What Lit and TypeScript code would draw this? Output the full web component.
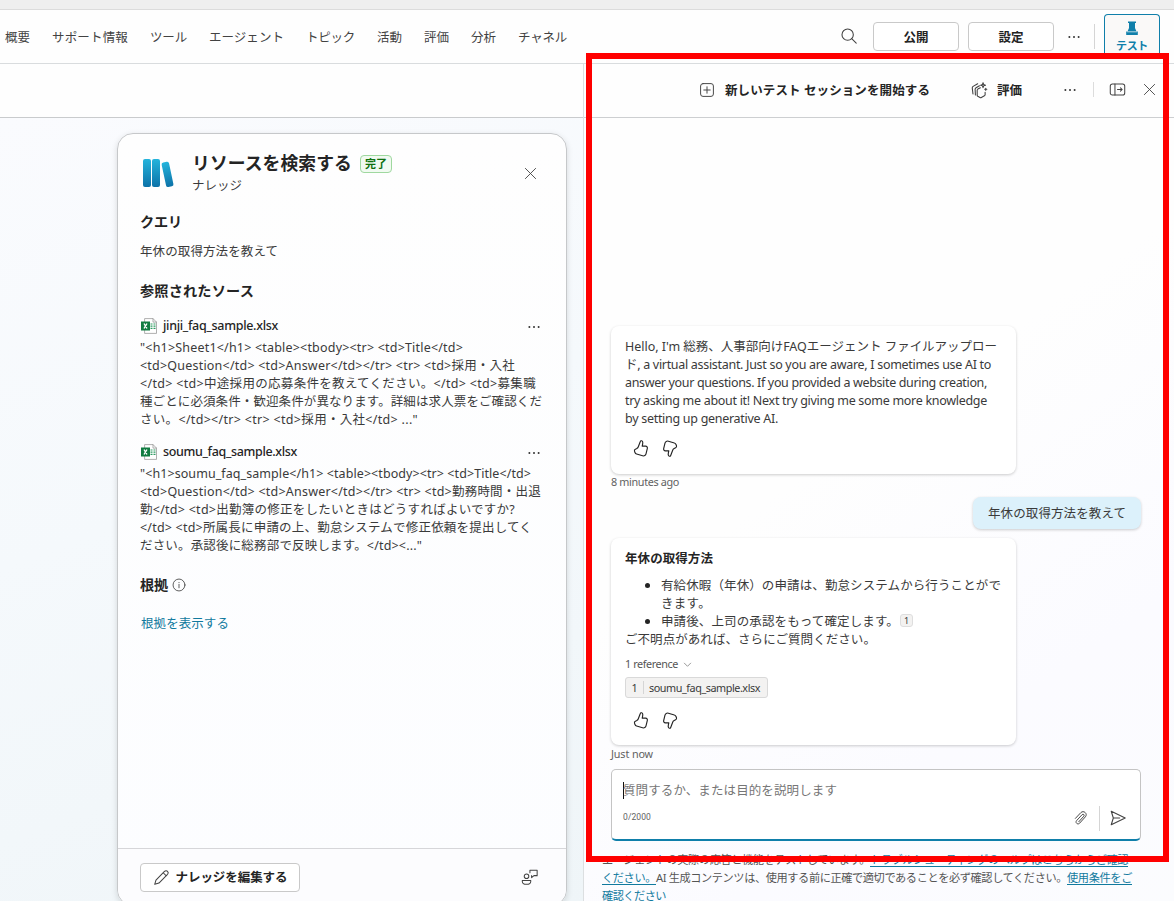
import { LitElement, html, css, svg } from "lit";
import { customElement } from "lit/decorators.js";

const fit = (text: string, width: number, cls = "") =>
  html`<span class="fit ${cls}" data-w=${width}>${text}</span>`;

const icon = (size: number, body: unknown, cls = "") =>
  html`<svg class="icon ${cls}" width=${size} height=${size} viewBox="0 0 20 20">${body}</svg>`;

const dots = svg`<g class="solid"><circle cx="4.2" cy="10" r="1.25"/><circle cx="10" cy="10" r="1.25"/><circle cx="15.800" cy="10" r="1.25"/></g>`;
const cross = svg`<path d="M3.2 3.2l13.600 13.600M16.800 3.200l-13.600 13.600"/>`;
const thumb = svg`<path d="M9.800 2.600c.5-1.500 2.700-.8 2.600 1.200 0 1.300-.3 2.400-.6 3.700h3.600c1.300 0 2.100 1.100 1.800 2.400l-1.400 5.700c-.4 1.700-1.900 2.600-3.600 2.100l-6.300-1.900c-.8-.2-1.400-.8-1.700-1.600l-.5-1.300c-.3-.9 0-1.700.9-2.100l1.500-.8c.7-.4 1.300-1 1.600-1.800z"/>`;

const NAV: [string, number][] = [
  ["概要", 25], ["サポート情報", 76], ["ツール", 37], ["エージェント", 75], ["トピック", 49],
  ["活動", 25], ["評価", 25], ["分析", 25], ["チャネル", 49],
];

const SOURCES: { name: string; w: number; lines: [string, number][] }[] = [
  {
    name: "jinji_faq_sample.xlsx", w: 115,
    lines: [
      ['"<h1>Sheet1</h1> <table><tbody><tr> <td>Title</td>', 323],
      ["<td>Question</td> <td>Answer</td></tr> <tr> <td>採用・入社", 375],
      ["</td> <td>中途採用の応募条件を教えてください。</td> <td>募集職", 396],
      ["種ごとに必須条件・歓迎条件が異なります。詳細は求人票をご確認くだ", 402],
      ['さい。</td></tr> <tr> <td>採用・入社</td> ..."', 278],
    ],
  },
  {
    name: "soumu_faq_sample.xlsx", w: 134,
    lines: [
      ['"<h1>soumu_faq_sample</h1> <table><tbody><tr> <td>Title</td>', 391],
      ["<td>Question</td> <td>Answer</td></tr> <tr> <td>勤務時間・出退", 401],
      ["勤</td> <td>出勤簿の修正をしたいときはどうすればよいですか?", 375],
      ["</td> <td>所属長に申請の上、勤怠システムで修正依頼を提出してく", 392],
      ['ださい。承認後に総務部で反映します。</td><..."', 282],
    ],
  },
];

const HELLO: [string, number][] = [
  ["Hello, I'm 総務、人事部向けFAQエージェント ファイルアップロー", 372],
  ["ド, a virtual assistant. Just so you are aware, I sometimes use AI to", 366],
  ["answer your questions. If you provided a website during creation,", 362],
  ["try asking me about it! Next try giving me some more knowledge", 362],
  ["by setting up generative AI.", 153],
];

@customElement("app-root")
export class AppRoot extends LitElement {
  static styles = css`
    :host { display: block; position: relative; width: 1174px; height: 901px; overflow: hidden; background: #fefefe;
      font-family: "Noto Sans", "Noto Sans CJK JP", sans-serif; font-size: 12.5px; line-height: 18px; color: #3a3a3a; }
    * { box-sizing: border-box; }
    .fit { display: inline-block; white-space: pre; }
    .icon { display: block; flex: none; fill: none; stroke: #424242; stroke-width: 1.2; stroke-linejoin: round; stroke-linecap: round; }
    .solid { fill: #333; stroke: none; }
    .line { height: 18px; white-space: nowrap; }
    .strip { height: 10px; background: #efefef; border-bottom: 1px solid #dcdcdc; }
    .top { height: 54px; display: flex; align-items: center; border-bottom: 1px solid #d9dcde; padding-left: 5px; color: #424242; }
    .nav { display: flex; gap: 22px; flex: 1; padding-top: 2px; }
    .search { margin: -1px 15px 0 0; }
    .btn { height: 29px; border: 1px solid #c9c9c9; border-radius: 4px; background: #fff; display: flex; align-items: center; justify-content: center; font-weight: 700; color: #242424; }
    .btn .fit { padding-top: 2px; }
    .wide { width: 86px; margin-right: 9px; }
    .tdots { margin: 0 12px 0 3px; }
    .sep { width: 1px; height: 25px; background: #d5d5d5; }
    .test { width: 56px; height: 45px; align-self: flex-start; margin: 4px 14px 0 9px; border: 1px solid #0f7faa; border-bottom: 0; border-radius: 4px 4px 0 0; background: #faf9f8; color: #0f7faa; font-weight: 700; font-size: 11px; display: flex; flex-direction: column; align-items: center; padding-top: 5px; gap: 1px; }
    .flask { fill: #0f7faa; stroke: none; }
    .main { display: grid; grid-template-columns: 583px 591px; height: 837px; }
    .left { display: flex; flex-direction: column; }
    .subbar { height: 54px; border-bottom: 1px solid #c9cbcd; background: #fefefe; flex: none; }
    .canvas { flex: 1; padding: 15px 16px 0 117px; background: linear-gradient(160deg, #fafbfe 0%, #f5f9fc 45%, #eff5f8 100%); }
    .card { width: 450px; height: 773px; border: 1px solid #c6c8ca; border-radius: 16px; background: linear-gradient(#fefefe, #fcfdff); box-shadow: 0 2px 6px #0002; display: flex; flex-direction: column; }
    .body { flex: 1; padding: 20px 22px 0; }
    .head { display: flex; height: 44px; align-items: flex-start; }
    .books { margin: 4px 17px 0 2px; stroke: none; }
    .titles { flex: 1; }
    .title { display: flex; align-items: center; gap: 8px; height: 22px; font-weight: 700; font-size: 17.8px; color: #242424; margin-top: -2px; }
    .badge { height: 18px; width: 32px; border: 1px solid #9fd89f; border-radius: 4px; background: #f1faf1; color: #0e700e; font-size: 11px; line-height: 16px; text-align: center; margin-top: 1px; }
    .sub { margin-top: 3px; }
    .close { margin: 12px 6px 0 0; }
    h3 { margin: 0; font-size: 14.2px; line-height: 20px; font-weight: 700; color: #242424; height: 20px; display: flex; align-items: center; gap: 4px; }
    .h-q { margin-top: 13px; }
    .h-q .fit { padding-top: 1px; }
    .query { margin: 12px 0 0; }
    .h-s { margin: 20px 0 16px; }
    .source { margin-bottom: 14px; }
    .file { display: flex; align-items: center; height: 18px; color: #242424; font-weight: 500; margin-bottom: 4px; }
    .file .fit { flex: none; }
    .xl { margin: 0 6px 0 1px; }
    .grow { flex: 1; }
    .sdots { margin: 2px 2px 0 0; }
    .h-r { margin-top: 20px; }
    .link { color: #117a9e; }
    .show { margin: 20px 0 0 1px; }
    .foot { height: 57px; border-top: 1px solid #d6d6d9; flex: none; display: flex; justify-content: space-between; align-items: center; padding: 0 28px 0 22px; background: #fcfcfe; border-radius: 0 0 16px 16px; }
    .edit { width: 160px; gap: 6px; }
    .right { border-left: 1px solid #dcdfe1; display: flex; flex-direction: column; background: linear-gradient(145deg, #fefefe 45%, #fbfbff 75%, #fbfcfe); }
    .tools { height: 54px; flex: none; border-bottom: 1px solid #cdcfd1; display: flex; align-items: center; padding: 0 0 2px 115px; font-weight: 700; color: #242424; }
    .tools .fit { flex: none; padding-top: 2px; }
    .new { margin: 0 40px 0 10px; }
    .ev { margin-right: 9px; }
    .rdots { margin: 0 15px 0 40px; }
    .dock { margin: 0 16px 0 15px; }
    .sep2 { width: 1px; height: 15px; background: #dcdcdc; }
    .chat { flex: 1; display: flex; flex-direction: column; padding: 208px 33px 0 27px; }
    .bubble { width: 405px; border-radius: 8px; background: #fff; box-shadow: 0 1px 3px #0003; padding: 12px 14px 0; }
    .hello { height: 148px; }
    .answer { height: 207px; margin-top: 9px; }
    .stamp { font-size: 10.8px; line-height: 16px; color: #616161; height: 16px; }
    .now { margin-top: 1px; }
    .thumbs { display: flex; gap: 11px; padding-left: 6px; margin-top: 11px; }
    .thumbs .icon { stroke: #242424; stroke-width: 1.2; }
    .answer .thumbs { margin-top: 13px; }
    .down { transform: rotate(180deg); }
    .mine { align-self: flex-end; width: 168px; height: 32px; margin-top: 7px; background: #dcf1fb; border-radius: 8px; box-shadow: 0 1px 3px #0003; display: flex; align-items: center; justify-content: center; padding-top: 1px; }
    .strong { font-weight: 700; color: #242424; margin-bottom: 9px; }
    .li { padding-left: 36px; display: flex; align-items: center; gap: 1px; }
    .li.dot::before { content: ""; width: 5px; height: 5px; border-radius: 50%; background: #242424; margin: -1px 10px 0 -16px; }
    .cite { width: 13px; height: 13px; border: 1px solid #dedede; border-radius: 3px; background: #f3f2f1; font-size: 9px; line-height: 11px; text-align: center; margin-top: -3px; }
    .refs { display: flex; align-items: center; gap: 5px; margin-top: 7px; font-size: 10.8px; line-height: 16px; color: #555; height: 16px; }
    .chip { width: 143px; height: 21px; margin-top: 5px; border: 1px solid #d9d9d9; border-radius: 3px; background: #f3f2f1; display: flex; align-items: center; font-size: 10.8px; }
    .num { width: 18px; text-align: center; border-right: 1px solid #d5d5d5; line-height: 13px; margin-right: 5px; }
    .composer { width: 530px; height: 72px; margin-top: 7px; border: 1px solid #c4c4c4; border-bottom: 2px solid #0f7faa; border-radius: 5px; background: #fff; padding: 11px 13px 0 11px; flex: none; }
    .ph { color: #767676; height: 18px; display: flex; align-items: center; }
    .ph .fit { padding-top: 2px; margin-left: -1px; }
    .caret { width: 1px; height: 17px; background: #111; }
    .tray { display: flex; align-items: center; height: 26px; margin-top: 6px; }
    .csep { margin: 0 9px 0 10px; }
    .count { flex: 1; font-family: Roboto, sans-serif; font-size: 8.5px; color: #616161; line-height: 24px; height: 26px; }
    .legal { margin: 10px 0 0 -9px; font-size: 11.2px; color: #555; white-space: nowrap; }
    .u { text-decoration: underline; text-underline-offset: 2px; color: #117a9e; }
    .frame { position: absolute; left: 586px; top: 53px; width: 583px; height: 809px; border: 6px solid #f00; }
  `;

  async firstUpdated() {
    await document.fonts.ready;
    this.renderRoot.querySelectorAll<HTMLElement>(".fit").forEach((el) => {
      const natural = el.getBoundingClientRect().width;
      const target = Number(el.dataset.w);
      el.style.letterSpacing = `${(target - natural) / (el.textContent ?? "").length}px`;
    });
  }

  thumbs() {
    return html`<div class="thumbs">${icon(19, thumb)}${icon(19, thumb, "down")}</div>`;
  }

  excel() {
    return html`<svg class="icon xl" width="16" height="16" viewBox="0 0 16 16">
      <path fill="#fff" stroke="#9a9a9a" stroke-width=".8" d="M4 .6h8l3.500 3.500v11.300H4z"/>
      <path stroke="#9a9a9a" stroke-width=".8" d="M12 .6v3.500h3.500"/>
      <path stroke="#2f9b63" stroke-width="1.200" stroke-linecap="butt" stroke-dasharray="2 1" d="M9.500 6h5M9.500 8.200h5M9.500 10.400h5"/>
      <rect x="0" y="3.500" width="9" height="9" fill="#107c41" stroke="none"/>
      <path stroke="#fff" stroke-width="1.200" d="M3.200 5.900l2.600 4.200M5.800 5.900l-2.600 4.200"/></svg>`;
  }

  render() {
    return html`
      <div class="strip"></div>
      <div class="top">
        <nav class="nav">${NAV.map(([t, w]) => fit(t, w))}</nav>
        ${icon(18, svg`<circle cx="8.500" cy="8.500" r="6.300"/><path d="M13 13l5 5"/>`, "search")}
        <div class="btn wide">${fit("公開", 25)}</div>
        <div class="btn wide">${fit("設定", 25)}</div>
        ${icon(16, dots, "tdots")}
        <div class="sep"></div>
        <div class="test">
          <svg class="icon" width="14" height="16" viewBox="0 0 14 16"><path class="flask" d="M3 1.500h8V3H10v5l1.500 3.500h1.300V15H1.200v-3.500h1.300L4 8V3H3z"/><path stroke="#fff" stroke-width=".7" d="M2.500 11.800h9"/></svg>
          ${fit("テスト", 32)}
        </div>
      </div>
      <div class="main">
        <section class="left">
          <div class="subbar"></div>
          <div class="canvas">
            <div class="card">
              <div class="body">
                <div class="head">
                  <svg class="icon books" width="33" height="30" viewBox="0 0 33 30">
                    <defs><linearGradient id="b" x1="0" y1="0" x2="0" y2="1"><stop offset="0" stop-color="#24b4dc"/><stop offset="1" stop-color="#0c72a8"/></linearGradient></defs>
                    <rect x="1" y="1" width="8" height="28" rx="2" fill="url(#b)"/>
                    <rect x="10" y="1" width="8" height="28" rx="2" fill="url(#b)"/>
                    <rect x="21.700" y="4" width="7.500" height="25" rx="2" fill="url(#b)" transform="rotate(-12 25 16)"/>
                  </svg>
                  <div class="titles">
                    <div class="title">${fit("リソースを検索する", 160)}<span class="badge">${fit("完了", 22)}</span></div>
                    <div class="sub">${fit("ナレッジ", 50)}</div>
                  </div>
                  ${icon(15, cross, "close")}
                </div>
                <h3 class="h-q">${fit("クエリ", 42)}</h3>
                <div class="line query">${fit("年休の取得方法を教えて", 138)}</div>
                <h3 class="h-s">${fit("参照されたソース", 114)}</h3>
                ${SOURCES.map((s) => html`<div class="source">
                  <div class="file">${this.excel()}${fit(s.name, s.w)}<span class="grow"></span>${icon(16, dots, "sdots")}</div>
                  ${s.lines.map(([t, w]) => html`<div class="line">${fit(t, w)}</div>`)}
                </div>`)}
                <h3 class="h-r">${fit("根拠", 28)}${icon(14, svg`<circle cx="10" cy="10" r="8.500"/><path d="M10 9v5M10 6.300v.2"/>`)}</h3>
                <div class="line show link">${fit("根拠を表示する", 88)}</div>
              </div>
              <div class="foot">
                <div class="btn edit">${icon(17, svg`<path d="M13.500 2.800c1.200-1.200 2.700-1 3.600-.1s1.100 2.400 0 3.600L7 16.500l-5 1.500 1.500-5zM12 4.400l3.600 3.600"/>`)}${fit("ナレッジを編集する", 112)}</div>
                ${icon(17, svg`<circle cx="6.500" cy="8.500" r="2.700"/><path d="M1.500 13.500h10v.8c0 5-10 5-10 0zM10.500 4.500v-3H19v6.300h-3.800l-2.700 2.400V7.800"/>`)}
              </div>
            </div>
          </div>
        </section>
        <section class="right">
          <div class="tools">
            ${icon(16, svg`<rect x="2" y="2" width="16" height="16" rx="3"/><path d="M10 6v8M6 10h8"/>`)}
            ${fit("新しいテスト セッションを開始する", 205, "new")}
            ${icon(18, svg`<path d="M11.500 7.500L8.700 9c-.5.300-.7.700-.7 1.200v5.600c0 .5.200.9.700 1.200l2.400 1.300c.5.300 1 .3 1.500 0l3.400-1.800c.5-.3.800-.7.800-1.200v-2.800M6 15.500l-.3-6.300c0-.8.400-1.300 1-1.700L10.500 5.300M3.300 14.500l-.8-6.800c0-.8.300-1.300 1-1.700L8.500 3M14.500 2l.7 2 2 .7-2 .7-.7 2-.7-2-2-.7 2-.7zM17.500 8v2.400M16.300 9.200h2.400"/>`, "ev")}
            ${fit("評価", 25)}
            ${icon(16, dots, "rdots")}
            <div class="sep2"></div>
            ${icon(17, svg`<rect x="1.500" y="3.500" width="17" height="13" rx="2.500"/><path d="M7 3.500v13M10 10h5.500M13.500 8l2 2-2 2"/>`, "dock")}
            ${icon(15, cross)}
          </div>
          <div class="chat">
            <div class="bubble hello">
              ${HELLO.map(([t, w]) => html`<div class="line">${fit(t, w)}</div>`)}
              ${this.thumbs()}
            </div>
            <div class="stamp">${fit("8 minutes ago", 68)}</div>
            <div class="mine">${fit("年休の取得方法を教えて", 138)}</div>
            <div class="bubble answer">
              <div class="line strong">${fit("年休の取得方法", 88)}</div>
              <div class="line li dot">${fit("有給休暇（年休）の申請は、勤怠システムから行うことがで", 340)}</div>
              <div class="line li">${fit("きます。", 50)}</div>
              <div class="line li dot">${fit("申請後、上司の承認をもって確定します。", 238)}<span class="cite">1</span></div>
              <div class="line">${fit("ご不明点があれば、さらにご質問ください。", 251)}</div>
              <div class="refs">${fit("1 reference", 53)}${icon(9, svg`<path d="M3 7l7 7 7-7"/>`)}</div>
              <div class="chip"><span class="num">1</span>${fit("soumu_faq_sample.xlsx", 111)}</div>
              ${this.thumbs()}
            </div>
            <div class="stamp now">${fit("Just now", 42)}</div>
            <div class="composer">
              <div class="ph"><span class="caret"></span>${fit("質問するか、または目的を説明します", 214)}</div>
              <div class="tray">
                <span class="count">${fit("0/2000", 28)}</span>
                ${icon(16, svg`<path d="M3 10.500l6.800-7.200c3.400-3.500 9 1.300 5.700 5.200l-7.200 8c-2.300 2.400-6-.6-3.800-3.200l6.900-7.500c1.400-1.400 3.400.3 2.200 1.900l-6.400 7"/>`)}
                <span class="sep csep"></span>
                ${icon(18, svg`<path d="M2.500 2.500l15.500 7.500-15.500 7.500 2.300-7.500zM4.800 10h7"/>`)}
              </div>
            </div>
            <div class="legal">
              <div class="line">${fit("エージェントの実際の応答と機能をテストしています。", 268)}${fit("トラブルシューティングのヘルプはこちらからご確認", 258, "u")}</div>
              <div class="line">${fit("ください。", 54, "u")}${fit("AI 生成コンテンツは、使用する前に正確で適切であることを必ず確認してください。", 411)}${fit("使用条件をご", 65, "u")}</div>
              <div class="line">${fit("確認ください", 64, "u")}</div>
            </div>
          </div>
        </section>
      </div>
      <div class="frame"></div>`;
  }
}
